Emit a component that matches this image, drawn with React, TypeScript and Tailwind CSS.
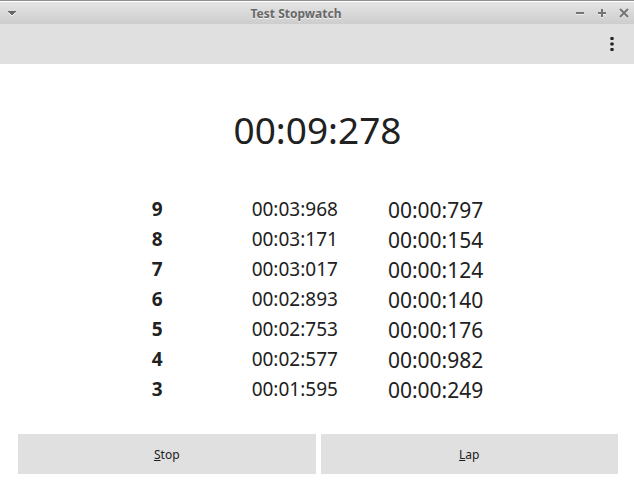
import React from "react";

type LapEntry = { lap: number; total: string; split: string };

const laps: LapEntry[] = [
  { lap: 9, total: "00:03:968", split: "00:00:797" },
  { lap: 8, total: "00:03:171", split: "00:00:154" },
  { lap: 7, total: "00:03:017", split: "00:00:124" },
  { lap: 6, total: "00:02:893", split: "00:00:140" },
  { lap: 5, total: "00:02:753", split: "00:00:176" },
  { lap: 4, total: "00:02:577", split: "00:00:982" },
  { lap: 3, total: "00:01:595", split: "00:00:249" },
];

function TitleBar() {
  return (
    <header className="flex h-6 items-center border-t border-[#908e90] bg-linear-to-b from-[#e6e6e6] to-[#cdcdcd] pl-2 pr-[5px] shadow-[inset_0_1px_0_#ffffff]">
      <button type="button" aria-label="Window menu">
        <svg className="block h-2 w-2" viewBox="0 0 8 8" shapeRendering="crispEdges">
          <path d="M1 4h1v1h1v1h2v-1h1v-1h1v1h-1v1h-1v1h-2v-1h-1v-1h-1z" fill="#f4f4f4" />
          <path d="M0 2h8v1h-1v1h-1v1h-1v1h-2v-1h-1v-1h-1v-1h-1z" fill="#686868" />
        </svg>
      </button>
      <h1 className="flex-1 pl-px pt-[2px] text-center text-xs font-bold text-[#686868] [text-shadow:0_1px_0_#f2f2f2]">
        Test Stopwatch
      </h1>
      <div className="flex items-center gap-3 text-[#747474]">
        <button type="button" aria-label="Minimize">
          <svg className="block h-[10px] w-[10px]" viewBox="0 0 10 10">
            <path d="M1 5h8v2h-8z" fill="#eeeeee" />
            <path d="M1 4h8v2h-8z" fill="currentColor" />
          </svg>
        </button>
        <button type="button" aria-label="Maximize">
          <svg className="block h-[10px] w-[10px]" viewBox="0 0 10 10">
            <path d="M1 5h8v2h-3v3h-2v-3h-3z" fill="#eeeeee" />
            <path d="M4 1h2v3h3v2h-3v3h-2v-3h-3v-2h3z" fill="currentColor" />
          </svg>
        </button>
        <button type="button" aria-label="Close">
          <svg className="block h-[10px] w-[10px]" viewBox="0 0 10 10" fill="none" strokeWidth="2">
            <path d="M1 2l8 8M9 2l-8 8" stroke="#eeeeee" />
            <path d="M1 1l8 8M9 1l-8 8" stroke="currentColor" />
          </svg>
        </button>
      </div>
    </header>
  );
}

function Toolbar() {
  return (
    <div className="flex h-10 items-center justify-end bg-[#e0e0e0] pr-5">
      <button type="button" aria-label="Options">
        <svg className="block h-[14px] w-1" viewBox="0 0 4 14" fill="#212121">
          <rect x="0.3" y="0" width="3.4" height="3" rx="1" />
          <rect x="0.3" y="5.5" width="3.4" height="3" rx="1" />
          <rect x="0.3" y="11" width="3.4" height="3" rx="1" />
        </svg>
      </button>
    </div>
  );
}

export default function App() {
  return (
    <div className="min-h-screen bg-white font-['Noto_Sans',sans-serif] text-[#212121]">
      <TitleBar />
      <Toolbar />
      <main className="pb-7 pl-[18px] pr-4">
        <p role="timer" className="pr-px pt-[2px] text-center text-[37px] leading-[128px]">00:09:278</p>
        <div className="flex justify-center pr-px">
          <table className="border-collapse text-[19px] leading-[30px]">
            <tbody>
              {laps.map((entry) => (
                <tr key={entry.lap} className="h-[30px]">
                  <th scope="row" className="p-0 pr-[89px] text-left font-bold">{entry.lap}</th>
                  <td className="p-0 pr-[50px]">{entry.total}</td>
                  <td className="p-0 pt-[2px] text-[21px] leading-[28px]">{entry.split}</td>
                </tr>
              ))}
            </tbody>
          </table>
        </div>
        <div className="mt-[30px] grid grid-cols-2 gap-[5px] text-xs">
          <button type="button" accessKey="s" className="h-10 bg-[#e0e0e0] pt-[2px]">
            <span className="underline underline-offset-1">S</span>top
          </button>
          <button type="button" accessKey="l" className="h-10 bg-[#e0e0e0] pt-[2px]">
            <span className="underline underline-offset-1">L</span>ap
          </button>
        </div>
      </main>
    </div>
  );
}
